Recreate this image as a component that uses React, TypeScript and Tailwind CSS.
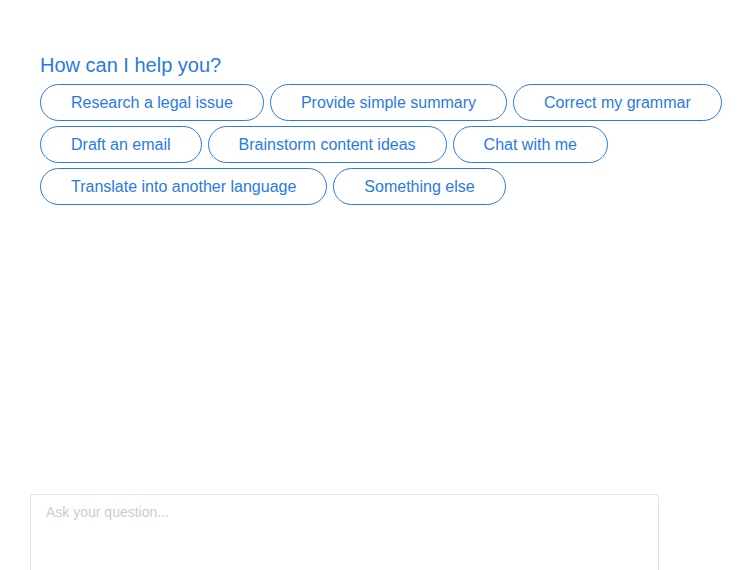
const suggestions = [
  "Research a legal issue",
  "Provide simple summary",
  "Correct my grammar",
  "Draft an email",
  "Brainstorm content ideas",
  "Chat with me",
  "Translate into another language",
  "Something else",
];

export default function App() {
  return (
    <div
      className="h-[570px] overflow-hidden bg-white"
      style={{ fontFamily: "'Liberation Sans', Arial, sans-serif" }}
    >
      <div className="pl-[40px] pr-[10px] pt-[53px]">
        <h2 className="text-[20px] leading-[24px] text-[#2a7ae4]">How can I help you?</h2>
        <div className="mt-[7px] flex flex-wrap gap-x-[6px] gap-y-[5px]">
          {suggestions.map((s) => (
            <button
              key={s}
              className="h-[37px] rounded-full border border-[#2a7ae4] bg-white px-[30px] text-[16px] leading-[19px] text-[#2a7ae4]"
            >
              {s}
            </button>
          ))}
        </div>
      </div>

      <div className="pl-[30px] pt-[289px]">
        <textarea
          placeholder="Ask your question..."
          className="block h-[110px] w-[629px] resize-none rounded-[3px] border border-[#dde3e8] px-[15px] pt-[8px] pb-[9px] text-[14px] leading-[18px] text-gray-700 outline-none placeholder:text-[#cccccc]"
        />
      </div>
    </div>
  );
}
